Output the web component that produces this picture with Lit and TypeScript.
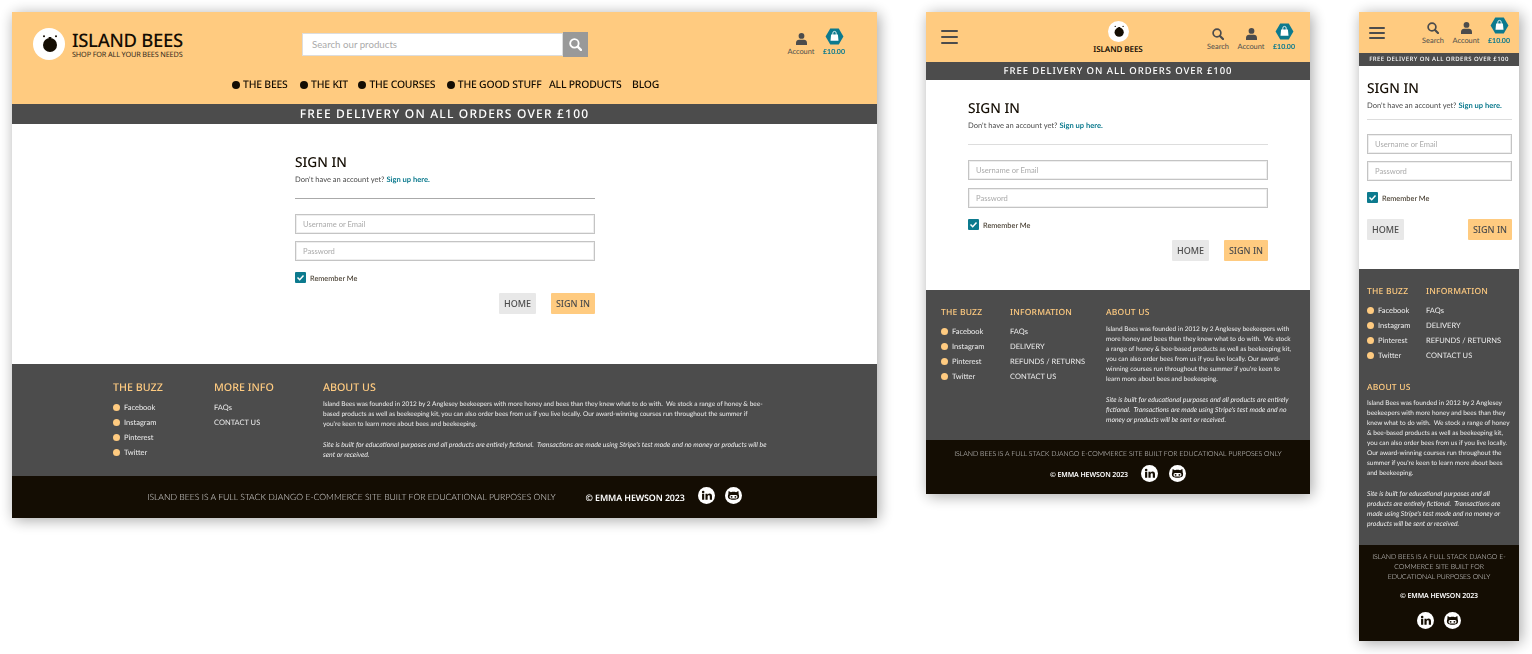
import { LitElement, html, css, svg } from 'lit';
import { customElement } from 'lit/decorators.js';

// every frame wraps the copy at its own place, so keep the lines as they are on the page
const ABOUT = {
    desk: [
        "Island Bees was founded in 2012 by 2 Anglesey beekeepers with more honey and bees than they knew what to do with.\u00a0 We stock a range of honey & bee-",
        "based products as well as beekeeping kit, you can also order bees from us if you live locally. Our award-winning courses run throughout the summer if",
        "you're keen to learn more about bees and beekeeping.",
    ],
    tab: [
        "Island Bees was founded in 2012 by 2 Anglesey beekeepers with",
        "more honey and bees than they knew what to do with.\u00a0 We stock",
        "a range of honey & bee-based products as well as beekeeping kit,",
        "you can also order bees from us if you live locally. Our award-",
        "winning courses run throughout the summer if you're keen to",
        "learn more about bees and beekeeping.",
    ],
    mob: [
        "Island Bees was founded in 2012 by 2 Anglesey",
        "beekeepers with more honey and bees than they",
        "knew what to do with.\u00a0 We stock a range of honey",
        "& bee-based products as well as beekeeping kit,",
        "you can also order bees from us if you live locally.",
        "Our award-winning courses run throughout the",
        "summer if you're keen to learn more about bees",
        "and beekeeping.",
    ],
};
const NOTE = {
    desk: [
        "Site is built for educational purposes and all products are entirely fictional.\u00a0 Transactions are made using Stripe's test mode and no money or products will be",
        "sent or received.",
    ],
    tab: [
        "Site is built for educational purposes and all products are entirely",
        "fictional.\u00a0 Transactions are made using Stripe's test mode and no",
        "money or products will be sent or received.",
    ],
    mob: [
        "Site is built for educational purposes and all",
        "products are entirely fictional.\u00a0 Transactions are",
        "made using Stripe's test mode and no money or",
        "products will be sent or received.",
    ],
};
const CREDIT = "ISLAND BEES IS A FULL STACK DJANGO E-COMMERCE SITE BUILT FOR EDUCATIONAL PURPOSES ONLY";
const SOCIALS = ["Facebook", "Instagram", "Pinterest", "Twitter"];
const DESK_INFO = ["FAQs", "CONTACT US"];
const INFO = ["FAQs", "DELIVERY", "REFUNDS / RETURNS", "CONTACT US"];

const personIcon = svg`<svg class="person" viewBox="0 0 11 12"><circle cx="5.500" cy="2.900" r="2.900" fill="#4c4c4c"/><path d="M0 12V9.800C0 7.800 1.500 6.700 3 6.700h5c1.500 0 3 1.100 3 3.100V12z" fill="#4c4c4c"/></svg>`;
const searchIcon = svg`<svg class="lens" viewBox="0 0 12 12"><circle cx="5" cy="5" r="3.900" fill="none" stroke="#4c4c4c" stroke-width="1.700"/><path d="M8 8l3 3" stroke="#4c4c4c" stroke-width="2.200" stroke-linecap="round"/></svg>`;
const bagIcon = svg`<svg class="hex" viewBox="0 0 22 20"><path d="M6 .5h10L21.500 10 16 19.500H6L.5 10z" fill="#0c7a8e"/><path d="M7 7.500h8l.7 7.500H6.300z" fill="#fff"/><path d="M9 8.500V6a2 2 0 0 1 4 0v2.500" fill="none" stroke="#fff" stroke-width="1"/></svg>`;
const logoMark = svg`<svg class="logo-mark" viewBox="0 0 32 32"><circle cx="16" cy="16" r="16" fill="#fff"/><circle cx="17" cy="17" r="7" fill="#140d03"/><circle cx="11" cy="8.300" r="1" fill="#140d03"/><circle cx="23" cy="8.300" r="1" fill="#140d03"/><path d="M15.500 9h3l-.5 2h-2z" fill="#140d03"/></svg>`;
const linkedinIcon = svg`<svg class="social" viewBox="0 0 18 18"><circle cx="9" cy="9" r="9" fill="#fff"/><rect x="4.300" y="7.200" width="2.300" height="6.300" fill="#140d03"/><circle cx="5.450" cy="5.200" r="1.350" fill="#140d03"/><path d="M7.900 7.200h2.200v1c.5-.8 1.300-1.200 2.200-1.200 1.700 0 2.500 1 2.500 2.900v3.600h-2.300v-3.200c0-1-.3-1.500-1.100-1.500-.8 0-1.200.6-1.200 1.500v3.200H7.900z" fill="#140d03"/></svg>`;
const githubIcon = svg`<svg class="social" viewBox="0 0 18 18"><circle cx="9" cy="9" r="9" fill="#fff"/><path d="M3.800 4.300l2.500 1.200c1.700-.5 3.700-.5 5.400 0l2.500-1.200.3 3.600c.6 1 .6 3-.2 4-.9 1-2.700 1.600-5.300 1.600s-4.400-.6-5.300-1.600c-.8-1-.8-3-.2-4z" fill="#140d03"/><rect x="4.800" y="8.600" width="8.400" height="3.600" rx="1.600" fill="#fff"/><circle cx="7" cy="10.400" r="1" fill="#140d03"/><circle cx="11" cy="10.400" r="1" fill="#140d03"/></svg>`;

@customElement('app-root')
export class AppRoot extends LitElement {
    static styles = css`
        :host{
            display: block;
            position: relative;
            width: 1532px;
            height: 654px;
            background: #fff;
            overflow: hidden;
            font-family: "Lato", "Noto Sans", sans-serif;
            color: #140d03;
            text-rendering: geometricPrecision;
        }

        /* the three device frames sit on a free canvas */
        .frame{
            position: absolute;
            top: 12px;
            display: flex;
            flex-direction: column;
            background: #fff;
            box-shadow: 2px 2px 14px rgba(0,0,0,.36);
            opacity: .999;
        }
        .desk{ left: 12px; width: 865px; }
        .tab{ left: 926px; width: 384px; }
        .mob{ left: 1359px; width: 160px; }

        header{
            background: #ffcb80;
            box-sizing: border-box;
        }
        .desk header{ height: 92px; padding: 15px 0 0 21px; }
        .tab header{ height: 50px; padding: 0 15px; display: grid; grid-template-columns: 1fr 1fr 1fr; align-items: center; }
        .mob header{ height: 41px; padding: 0 8px 0 10px; display: flex; justify-content: space-between; align-items: center; }

        .top-row{
            display: grid;
            grid-template-columns: 269px 286px 1fr;
            align-items: center;
            height: 34px;
        }
        .brand{ display: flex; align-items: center; gap: 7px; }
        .logo-mark{ width: 32px; height: 32px; display: block; }
        .brand-name{
            font-family: "Noto Sans", sans-serif;
            font-size: 18.500px;
            font-weight: 500;
            line-height: 20px;
            letter-spacing: -.3px;
            margin-top: 1px;
        }
        .brand-tag{
            font-family: "Noto Sans", sans-serif;
            font-size: 7.300px;
            line-height: 8px;
            letter-spacing: -.15px;
            color: #33291a;
        }

        .search{ display: flex; align-items: stretch; width: 286px; height: 25px; }
        .search input{
            width: 261px;
            box-sizing: border-box;
            margin: 1px 0;
            border: 1px solid #ddd;
            background: #fff;
            padding: 0 9px;
            font: 9.700px "Lato", sans-serif;
            outline: none;
        }
        input::placeholder{ color: #aaa; opacity: 1; }
        .search button{
            width: 25px;
            border: 0;
            padding: 0;
            background: #999;
            display: flex;
            align-items: center;
            justify-content: center;
        }
        .search svg{ width: 13px; height: 13px; }

        .tools{ display: flex; justify-content: flex-end; gap: 9px; padding-right: 31px; margin-top: -4px; }
        .tab .tools{ padding-right: 0; margin: 0 -1px 0 0; }
        .mob .tools{ padding-right: 0; margin-top: -3px; }
        .tool{
            display: flex;
            flex-direction: column;
            align-items: center;
            width: 24px;
            font-size: 7.400px;
            line-height: 8px;
            color: #4c4c4c;
            white-space: nowrap;
        }
        .slot{ height: 17px; margin-bottom: 3px; display: flex; align-items: flex-end; }
        .person{ width: 11px; height: 12px; display: block; }
        .lens{ width: 12px; height: 12px; display: block; }
        .hex{ width: 19px; height: 17px; display: block; }
        .price{ color: #0c7a8e; font-weight: 700; font-size: 7px; }

        nav{
            display: flex;
            margin: 17px 0 0 199px;
            font-family: "Noto Sans", sans-serif;
            font-size: 10.400px;
            font-weight: 500;
            line-height: 14px;
            letter-spacing: -.2px;
        }
        .nav-item{ display: flex; align-items: center; gap: 3px; margin-right: 11.500px; white-space: nowrap; }
        .nav-item.first{ margin-right: 12.500px; }
        .nav-item.tight{ margin-right: 7.500px; }
        .nav-item.near{ margin-right: 10.500px; }
        .nav-item i{ width: 8px; height: 8px; border-radius: 50%; background: #140d03; }

        .burger{ width: 17px; height: 14px; display: flex; flex-direction: column; justify-content: space-between; }
        .burger span{ height: 2px; border-radius: 1px; background: #4c4c4c; }
        .mob .burger{ width: 16px; height: 12px; }

        .tab-logo{ display: flex; flex-direction: column; align-items: center; }
        .tab-logo .logo-mark{ width: 21px; height: 21px; margin-bottom: 3px; }
        .tab-logo span{
            font-family: "Noto Sans", sans-serif;
            font-size: 8.100px;
            font-weight: 600;
            line-height: 9px;
            letter-spacing: -.1px;
        }

        .delivery{
            background: #4c4c4c;
            color: #fff;
            text-align: center;
            font-family: "Noto Sans", sans-serif;
            font-weight: 500;
            white-space: nowrap;
        }
        .desk .delivery{ height: 20px; line-height: 20px; font-size: 12px; letter-spacing: 1.200px; }
        .tab .delivery{ height: 18px; line-height: 18px; font-size: 9.500px; letter-spacing: .94px; }
        .mob .delivery{ height: 13px; line-height: 13px; font-size: 6px; letter-spacing: .46px; }

        main{ box-sizing: border-box; }
        .desk main{ height: 240px; padding: 30px 282px 0 283px; }
        .tab main{ height: 210px; padding: 20px 42px 0 42px; }
        .mob main{ height: 203px; padding: 14px 7px 0 8px; }

        h1{
            margin: 0;
            font-family: "Noto Sans", sans-serif;
            font-size: 13.700px;
            font-weight: 500;
            line-height: 18px;
        }
        .sub{ margin: 3px 0 0; font-size: 7.550px; line-height: 10px; color: #4c4c4c; }
        .sub a{ color: #0c7a8e; font-weight: 700; text-decoration: none; }
        .rule{ height: 1px; border: 0; margin: 13px 0 15px; background: #aaa; }
        .tab .rule, .mob .rule{ background: #ddd; }
        .mob .rule{ margin: 8px 0 14px; }

        .field{
            display: block;
            width: 100%;
            box-sizing: border-box;
            height: 20px;
            margin-bottom: 7px;
            border: 1px solid #c4c4c4;
            box-shadow: inset 0 0 0 1px #eee;
            padding: 0 7px;
            font: 7.600px "Lato", sans-serif;
            outline: none;
        }
        .tab .field{ margin-bottom: 8px; }
        .remember{ display: flex; align-items: center; gap: 4px; height: 11px; margin-top: 11px; font-size: 7.400px; line-height: 11px; color: #33291a; }
        .remember span:last-child{ padding-top: 1px; }
        .check{ width: 11px; height: 11px; border-radius: 1px; background: #0c7a8e; display: flex; }
        .check svg{ width: 11px; height: 11px; }
        .actions{ display: flex; justify-content: flex-end; gap: 15px; margin-top: 10px; }
        .mob .actions{ justify-content: space-between; margin-top: 16px; }
        .actions button{
            height: 21px;
            border: 0;
            padding: 0;
            border-radius: 1px;
            font-family: "Noto Sans", sans-serif;
            font-size: 9px;
            font-weight: 500;
            color: #4c4c4c;
        }
        .home{ width: 37px; background: #e8e8e8; }
        .go{ width: 44px; background: #ffcb80; }

        .foot{
            background: #4c4c4c;
            color: #eee;
            box-sizing: border-box;
            display: grid;
            align-content: start;
        }
        .desk .foot{ height: 112px; padding: 17px 0 0 101px; grid-template-columns: 101px 109px 443px; }
        .tab .foot{ height: 150px; padding: 16px 0 0 15px; grid-template-columns: 69px 96px 192px; }
        .mob .foot{ height: 276px; padding: 16px 7px 0 8px; grid-template-columns: 59px 1fr; }
        h2{
            margin: 0 0 5px;
            font-family: "Noto Sans", sans-serif;
            font-size: 10.700px;
            font-weight: 500;
            line-height: 14px;
            color: #ffcb80;
            white-space: nowrap;
        }
        .tab h2, .mob h2{ font-size: 8.500px; letter-spacing: .2px; }
        ul{ list-style: none; margin: 0; padding: 0; font-size: 7.500px; line-height: 15px; white-space: nowrap; }
        .tab ul, .mob ul{ margin-top: -1px; }
        .buzz li{ display: flex; align-items: center; gap: 4px; }
        .buzz i{ width: 7px; height: 7px; border-radius: 50%; background: #ffcb80; }
        .about p{ margin: 0 0 10px; font-size: 6.500px; line-height: 10px; white-space: nowrap; }
        .about p span{ display: block; }
        .about p.note{ font-style: italic; font-size: 6.850px; }
        .desk .about p.note{ font-size: 6.930px; }
        .mob .about{ grid-column: 1 / 3; margin-top: 18px; }
        .mob .about h2{ margin-bottom: 4px; }

        .bottom{ background: #140d03; color: #fff; box-sizing: border-box; display: flex; align-items: center; justify-content: center; }
        .desk .bottom{ height: 42px; gap: 30px; }
        .tab .bottom{ height: 54px; flex-direction: column; gap: 6px; }
        .mob .bottom{ height: 96px; flex-direction: column; justify-content: flex-start; gap: 8px; padding: 7px 12px 0; }
        .credit{ font-size: 8.600px; font-weight: 300; line-height: 10px; color: #ddd; text-align: center; white-space: nowrap; }
        .tab .credit, .mob .credit{ font-size: 6.900px; }
        .mob .credit{ white-space: normal; }
        .owner{ display: flex; align-items: center; gap: 13px; }
        .mob .owner{ flex-direction: column; gap: 10px; }
        .copy{ font-family: "Noto Sans", sans-serif; font-size: 8.900px; font-weight: 600; line-height: 10px; letter-spacing: -.1px; white-space: nowrap; padding-top: 2px; }
        .tab .copy, .mob .copy{ font-size: 7px; }
        .socials{ display: flex; gap: 10px; margin-bottom: 3px; }
        .tab .socials{ gap: 11px; }
        .social{ width: 17px; height: 17px; display: block; }
    `;

    tool(icon: unknown, label: string, cls = '') {
        return html`<div class="tool ${cls}"><div class="slot">${icon}</div><span>${label}</span></div>`;
    }

    tools(withSearch: boolean) {
        return html`
            <div class="tools">
                ${withSearch ? this.tool(searchIcon, 'Search') : ''}
                ${this.tool(personIcon, 'Account')}
                ${this.tool(bagIcon, '£10.00', 'price')}
            </div>
        `;
    }

    burger() {
        return html`<div class="burger"><span></span><span></span><span></span></div>`;
    }

    deskHeader() {
        return html`
            <header>
                <div class="top-row">
                    <div class="brand">
                        ${logoMark}
                        <div>
                            <div class="brand-name">ISLAND BEES</div>
                            <div class="brand-tag">SHOP FOR ALL YOUR BEES NEEDS</div>
                        </div>
                    </div>
                    <div class="search">
                        <input type="text" placeholder="Search our products">
                        <button type="button"><svg viewBox="0 0 12 12"><circle cx="5" cy="5" r="3.900" fill="none" stroke="#fff" stroke-width="1.700"/><path d="M8 8l3 3" stroke="#fff" stroke-width="2.200" stroke-linecap="round"/></svg></button>
                    </div>
                    ${this.tools(false)}
                </div>
                <nav>
                    <span class="nav-item first"><i></i>THE BEES</span>
                    <span class="nav-item near"><i></i>THE KIT</span>
                    <span class="nav-item"><i></i>THE COURSES</span>
                    <span class="nav-item tight"><i></i>THE GOOD STUFF</span>
                    <span class="nav-item near">ALL PRODUCTS</span>
                    <span class="nav-item">BLOG</span>
                </nav>
            </header>
        `;
    }

    signIn() {
        return html`
            <main>
                <h1>SIGN IN</h1>
                <p class="sub">Don't have an account yet? <a href="#">Sign up here.</a></p>
                <hr class="rule">
                <input class="field" type="text" placeholder="Username or Email">
                <input class="field" type="password" placeholder="Password">
                <div class="remember">
                    <span class="check"><svg viewBox="0 0 11 11"><path d="M2.500 5.500l2.200 2.200 3.800-4.200" fill="none" stroke="#fff" stroke-width="1.500"/></svg></span>
                    <span>Remember Me</span>
                </div>
                <div class="actions">
                    <button class="home" type="button">HOME</button>
                    <button class="go" type="button">SIGN IN</button>
                </div>
            </main>
        `;
    }

    footer(size: 'desk' | 'tab' | 'mob', infoTitle: string, info: string[]) {
        return html`
            <section class="foot">
                <div class="buzz">
                    <h2>THE BUZZ</h2>
                    <ul>${SOCIALS.map(s => html`<li><i></i>${s}</li>`)}</ul>
                </div>
                <div>
                    <h2>${infoTitle}</h2>
                    <ul>${info.map(s => html`<li>${s}</li>`)}</ul>
                </div>
                <div class="about">
                    <h2>ABOUT US</h2>
                    <p>${ABOUT[size].map(l => html`<span>${l}</span>`)}</p>
                    <p class="note">${NOTE[size].map(l => html`<span>${l}</span>`)}</p>
                </div>
            </section>
        `;
    }

    bottom() {
        return html`
            <section class="bottom">
                <div class="credit">${CREDIT}</div>
                <div class="owner">
                    <span class="copy">© EMMA HEWSON 2023</span>
                    <div class="socials">${linkedinIcon}${githubIcon}</div>
                </div>
            </section>
        `;
    }

    render() {
        return html`
            <div class="frame desk">
                ${this.deskHeader()}
                <div class="delivery">FREE DELIVERY ON ALL ORDERS OVER £100</div>
                ${this.signIn()}
                ${this.footer('desk', 'MORE INFO', DESK_INFO)}
                ${this.bottom()}
            </div>

            <div class="frame tab">
                <header>
                    ${this.burger()}
                    <div class="tab-logo">${logoMark}<span>ISLAND BEES</span></div>
                    ${this.tools(true)}
                </header>
                <div class="delivery">FREE DELIVERY ON ALL ORDERS OVER £100</div>
                ${this.signIn()}
                ${this.footer('tab', 'INFORMATION', INFO)}
                ${this.bottom()}
            </div>

            <div class="frame mob">
                <header>
                    ${this.burger()}
                    ${this.tools(true)}
                </header>
                <div class="delivery">FREE DELIVERY ON ALL ORDERS OVER £100</div>
                ${this.signIn()}
                ${this.footer('mob', 'INFORMATION', INFO)}
                ${this.bottom()}
            </div>
        `;
    }
}
